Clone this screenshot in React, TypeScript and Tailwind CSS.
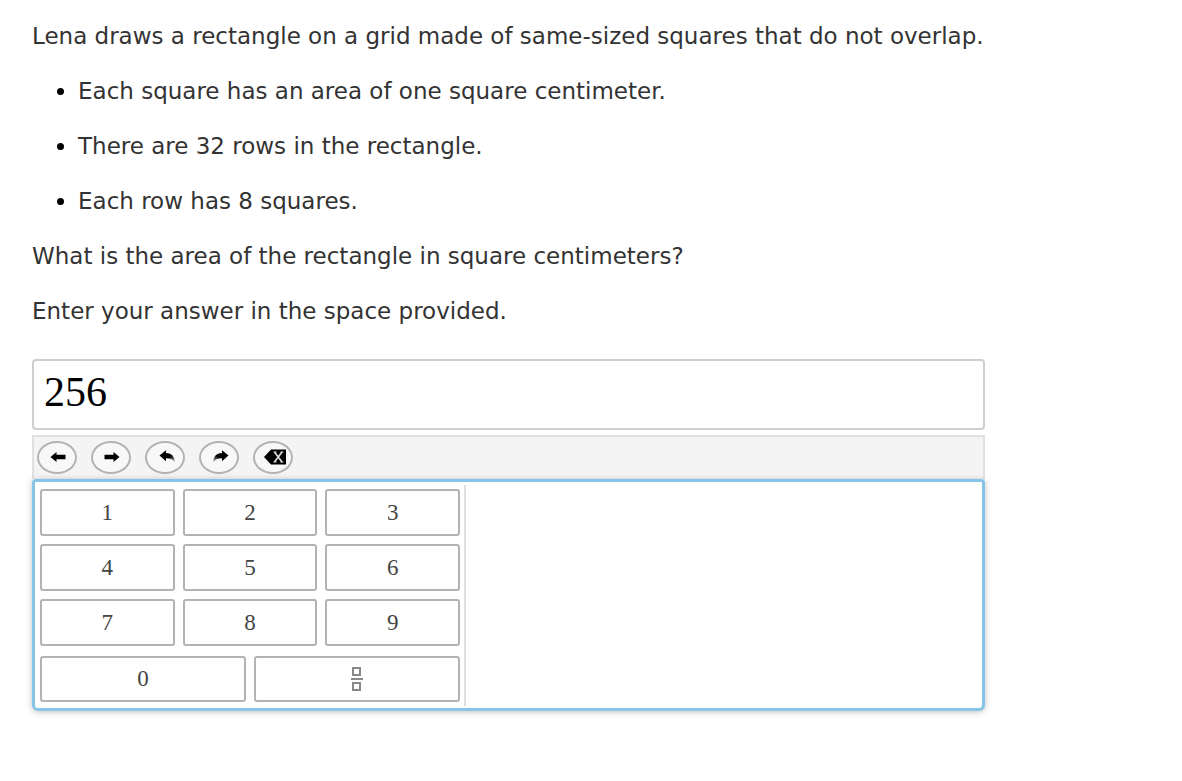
import React, { useState } from "react";

type Key = {
  label: string;
  value: string;
};

const facts = [
  "Each square has an area of one square centimeter.",
  "There are 32 rows in the rectangle.",
  "Each row has 8 squares.",
];

const digits: Key[] = ["1", "2", "3", "4", "5", "6", "7", "8", "9"].map((d) => ({
  label: d,
  value: d,
}));

const keyClass =
  "flex items-center justify-center rounded-[3px] border-2 border-[#b3b3b3] bg-white font-['Liberation_Serif',serif] text-[23px] leading-6 text-[#444] cursor-pointer";

function LeftIcon() {
  return (
    <svg viewBox="0 0 16 12" className="ml-0.5 h-3 w-4" fill="currentColor" aria-hidden="true">
      <path d="M0.5 6 6.500 1V3.800h9v4.400h-9V11z" />
    </svg>
  );
}

function RightIcon() {
  return (
    <svg viewBox="0 0 16 12" className="ml-0.5 h-3 w-4" fill="currentColor" aria-hidden="true">
      <path d="M15.500 6 9.500 1V3.800h-9v4.400h9V11z" />
    </svg>
  );
}

function UndoIcon() {
  return (
    <svg viewBox="0 0 17 14" className="ml-1 h-3.5 w-[17px]" aria-hidden="true">
      <defs>
        <linearGradient id="undo-tail" x1="0" y1="0" x2="1" y2="1">
          <stop offset="0.6" stopColor="#000" />
          <stop offset="1" stopColor="#000" stopOpacity="0.2" />
        </linearGradient>
      </defs>
      <path
        fill="url(#undo-tail)"
        d="M.5 5.500 7 .3v2.700c5.500.3 9 3.500 8.700 9.500C14.500 9.500 11.500 8.200 7 8.200v3z"
      />
    </svg>
  );
}

function RedoIcon() {
  return (
    <svg viewBox="0 0 17 14" className="ml-0.5 h-3.5 w-[17px]" aria-hidden="true">
      <defs>
        <linearGradient id="redo-tail" x1="1" y1="0" x2="0" y2="1">
          <stop offset="0.6" stopColor="#000" />
          <stop offset="1" stopColor="#000" stopOpacity="0.2" />
        </linearGradient>
      </defs>
      <path
        fill="url(#redo-tail)"
        d="M16.500 5.500 10 .3v2.700C4.500 3.300 1 6.500 1.300 12.500 2.500 9.500 5.500 8.200 10 8.200v3z"
      />
    </svg>
  );
}

function BackspaceIcon() {
  return (
    <svg viewBox="0 0 22 16" className="ml-1 h-4 w-[22px]" aria-hidden="true">
      <path d="M0 8 7 .5h15v15H7z" fill="currentColor" />
      <path d="M10.500 3 18 13M18 3 10.500 13" stroke="#ddd" strokeWidth="1.600" fill="none" />
      <path d="M9.500 3h3M16.500 3h3M9.500 13h3M16.500 13h3" stroke="#ddd" strokeWidth="1" />
    </svg>
  );
}

function FractionIcon() {
  return (
    <svg viewBox="0 0 12 26" className="h-[26px] w-3" fill="none" stroke="#888" strokeWidth="2" aria-hidden="true">
      <rect x="2" y="2" width="7" height="7" />
      <path d="M0 13h12" />
      <rect x="2" y="17" width="7" height="7" />
    </svg>
  );
}

type ToolButtonProps = {
  label: string;
  onClick?: () => void;
  children: React.ReactNode;
};

function ToolButton({ label, onClick, children }: ToolButtonProps) {
  return (
    <button
      type="button"
      aria-label={label}
      onClick={onClick}
      className="flex h-[33px] w-10 items-center justify-center rounded-[50%] border-2 border-[#b3b3b3] bg-[#f8f8f8] text-black cursor-pointer"
    >
      {children}
    </button>
  );
}

export default function App() {
  const [answer, setAnswer] = useState("256");

  return (
    <main className="min-h-screen bg-white px-8 py-5 font-['DejaVu_Sans',Verdana,sans-serif] text-[23px] leading-8 text-[#333]">
      <div className="max-w-[953px]">
        <div className="flex flex-col gap-[23px]">
          <p>Lena draws a rectangle on a grid made of same-sized squares that do not overlap.</p>
          <ul className="flex list-disc flex-col gap-[23px] pl-[46px] marker:text-black">
            {facts.map((fact) => (
              <li key={fact}>{fact}</li>
            ))}
          </ul>
          <p>What is the area of the rectangle in square centimeters?</p>
          <p>Enter your answer in the space provided.</p>
        </div>

        <input
          type="text"
          aria-label="Answer"
          value={answer}
          onChange={(e) => setAnswer(e.target.value)}
          className="mt-8 block h-[71px] w-full rounded-[4px] border-2 border-[#cfcfcf] bg-white px-2.5 pb-1.5 font-['Liberation_Serif',serif] text-[42px] text-black outline-none"
        />

        <div className="mt-[5px]">
          <div className="flex h-11 items-center gap-3.5 border-2 border-b-0 border-[#e0e0e0] bg-[#f4f4f4] px-[3px] pb-0.5">
            <ToolButton label="Move left">
              <LeftIcon />
            </ToolButton>
            <ToolButton label="Move right">
              <RightIcon />
            </ToolButton>
            <ToolButton label="Undo">
              <UndoIcon />
            </ToolButton>
            <ToolButton label="Redo">
              <RedoIcon />
            </ToolButton>
            <ToolButton label="Backspace" onClick={() => setAnswer(answer.slice(0, -1))}>
              <BackspaceIcon />
            </ToolButton>
          </div>

          <div className="flex rounded-[4px] rounded-b-[6px] border-3 border-[#87c5e8] bg-white pt-[3px] pb-0.5 shadow-[0_1px_6px_rgba(0,0,0,0.25)]">
            <div className="flex w-full max-w-[431px] flex-col gap-2.5 border-r-2 border-[#e0e0e0] py-1 pr-1 pl-[5px]">
              <div className="grid grid-cols-3 gap-2">
                {digits.map((key) => (
                  <button
                    key={key.label}
                    type="button"
                    className={`${keyClass} h-[47px]`}
                    onClick={() => setAnswer(answer + key.value)}
                  >
                    {key.label}
                  </button>
                ))}
              </div>
              <div className="grid grid-cols-2 gap-2">
                <button
                  type="button"
                  className={`${keyClass} h-[46px]`}
                  onClick={() => setAnswer(answer + "0")}
                >
                  0
                </button>
                <button
                  type="button"
                  aria-label="Fraction"
                  className={`${keyClass} h-[46px]`}
                  onClick={() => setAnswer(answer + "/")}
                >
                  <FractionIcon />
                </button>
              </div>
            </div>
          </div>
        </div>
      </div>
    </main>
  );
}
